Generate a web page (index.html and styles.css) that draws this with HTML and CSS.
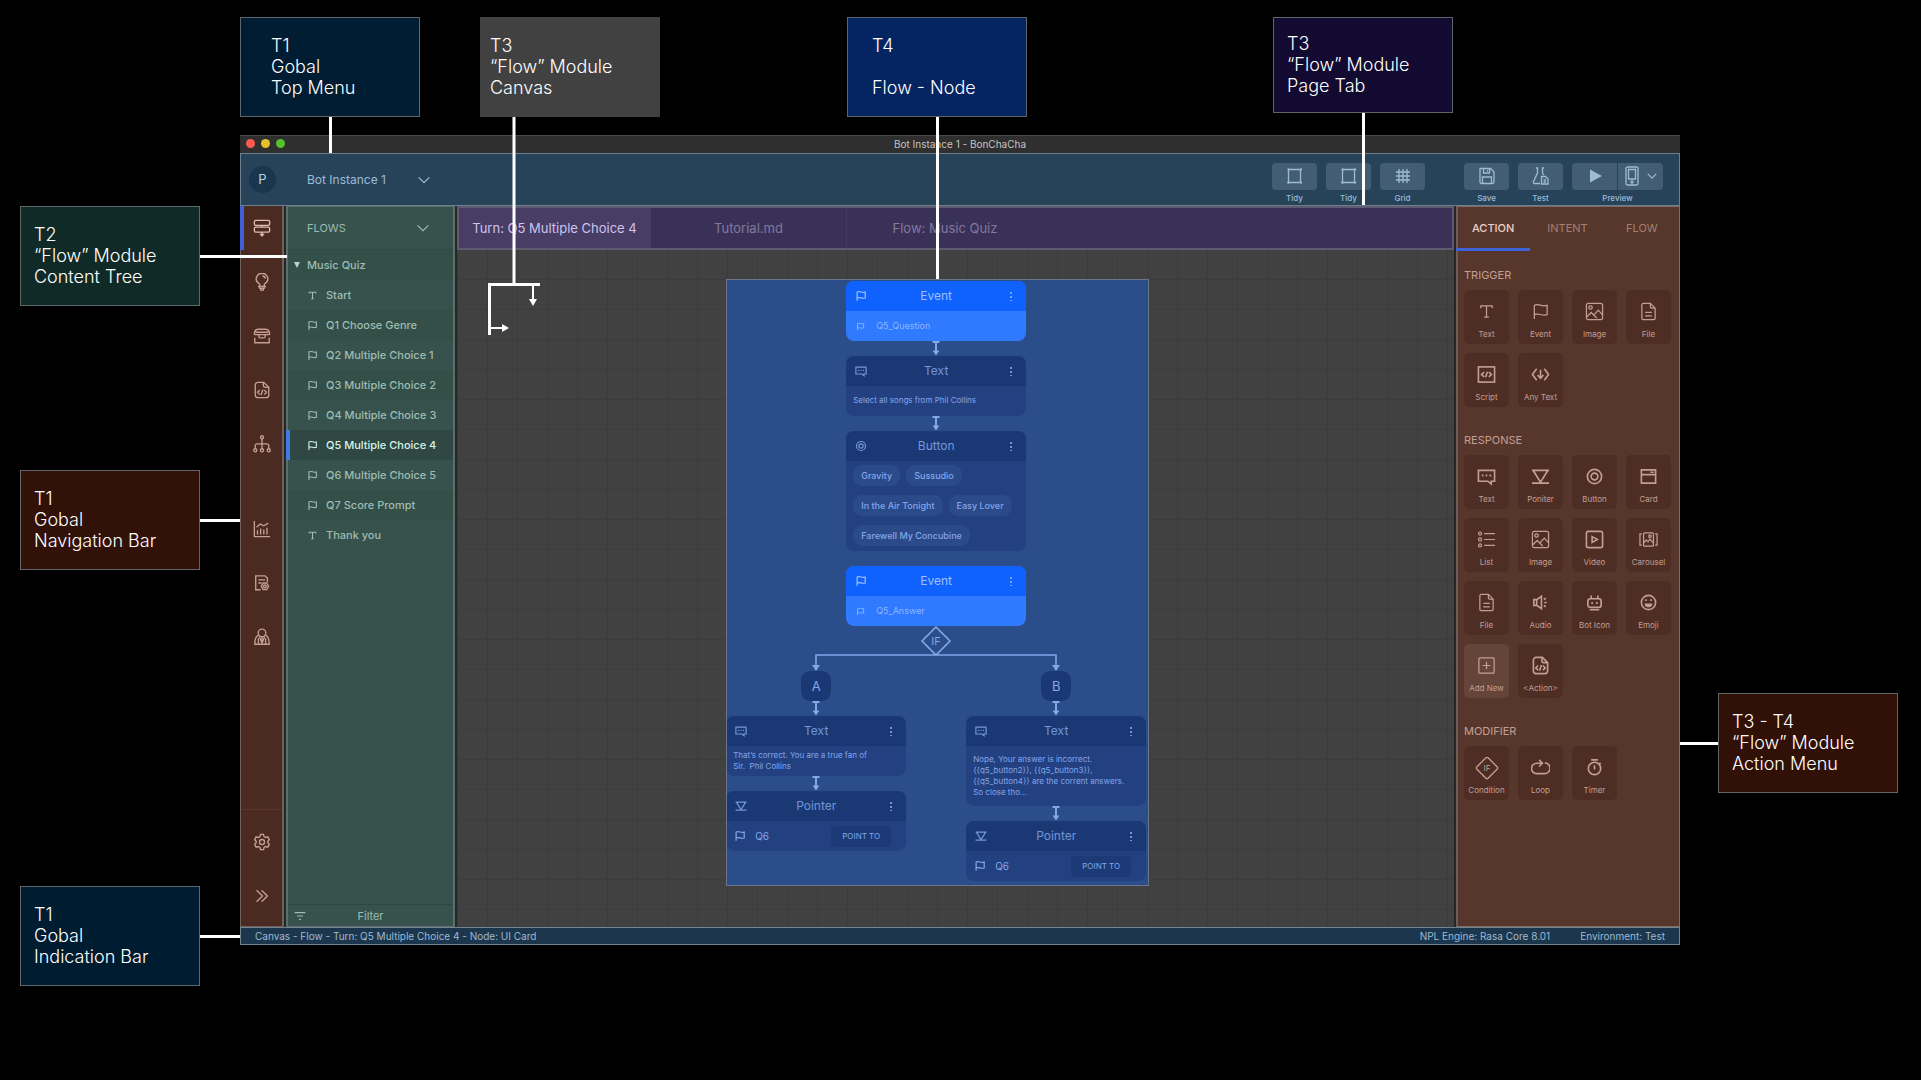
FILE: index.html
```html
<!DOCTYPE html>
<html lang="en">
<head>
<meta charset="utf-8">
<meta name="viewport" content="width=device-width, initial-scale=1">
<title>Bot Instance 1 - BonChaCha</title>
<link rel="stylesheet" href="styles.css">
</head>
<body>
<svg class="sprite" aria-hidden="true">
  <symbol id="i-flow" viewBox="0 0 20 20"><rect x="1.500" y="1.500" width="17" height="5.500" rx="1.500"/><rect x="1.500" y="9" width="17" height="5.500" rx="1.500"/><path d="M10 7v2M10 14.500v3"/><path class="solid" d="M7 16.500h6l-3 3.500z"/></symbol>
  <symbol id="i-bulb" viewBox="0 0 20 20"><path d="M7.500 15v-2.500C5.200 11.200 3.500 9.300 3.500 6.800a6.500 6.500 0 0 1 13 0c0 2.500-1.700 4.400-4 5.700V15M5.500 15h9M7.500 15v2h5v-2M8.500 17v2h3v-2M10.500 3.300c1.700.2 3 1.400 3.200 3"/></symbol>
  <symbol id="i-chest" viewBox="0 0 20 20"><path d="M1.500 8.500c0-4 1.500-6 4.500-6h8c3 0 4.500 2 4.500 6M3 5.800h14M1.500 8.500h17M6.500 8.500v2c0 1 .7 1.500 1.500 1.500h4c.8 0 1.500-.5 1.500-1.500v-2M2 12v5.500h16V12"/></symbol>
  <symbol id="i-code-file" viewBox="0 0 20 20"><path d="M12 1.500H5.500a3 3 0 0 0-3 3v11a3 3 0 0 0 3 3h9a3 3 0 0 0 3-3V7zM11.500 1.500V5c0 1.300.8 2 2 2h4M7.500 10L5 12.500 7.500 15M12.500 10l2.500 2.500-2.500 2.500M11 9.500l-2 6"/></symbol>
  <symbol id="i-tree" viewBox="0 0 20 20"><circle cx="10" cy="2.500" r="1.700"/><circle cx="2.500" cy="17" r="1.700"/><circle cx="10" cy="17" r="1.700"/><circle cx="17.500" cy="17" r="1.700"/><path d="M10 4.200v11.100M2.500 15.300V12c0-1.500.7-2.200 2.200-2.200h10.600c1.500 0 2.200.7 2.200 2.200v3.300"/></symbol>
  <symbol id="i-chart" viewBox="0 0 20 20"><path d="M1.500 1v17.500H19M5 16v-4.500M8.500 16V9.500M12 16v-5.500M15.500 16V8.500M4 8l4-3.500 4 2L17 3.500"/></symbol>
  <symbol id="i-report" viewBox="0 0 20 20"><path d="M8.500 17.500H3V2h10.500l2.500 2.500v4.500M6 6.500h7.500M6 10h3.500M9.300 13.500l2-3.500h4l2 3.500-2 3.700h-4z"/><circle cx="13.300" cy="13.600" r="1.500"/></symbol>
  <symbol id="i-agent" viewBox="0 0 20 20"><circle cx="10" cy="5.500" r="4.200"/><path d="M6.500 8c-3 .8-4.500 3.500-4.500 10h16c0-6.500-1.500-9.200-4.500-10M7 9.500l3 7.500 3-7.500M6 11.500V18M14 11.500V18M10 10v7"/></symbol>
  <symbol id="i-gear" viewBox="0 0 20 20"><path d="M8.300 1.500h3.400l.6 2.500 1.700 1 2.500-.7 1.700 3-1.700 1.800v1.800l1.700 1.800-1.700 3-2.500-.7-1.700 1-.6 2.500H8.300l-.6-2.500-1.700-1-2.500.7-1.700-3 1.700-1.800V9.100L1.800 7.300l1.700-3L6 5l1.700-1z"/><circle cx="10" cy="10" r="2.800"/></symbol>
  <symbol id="i-forward" viewBox="0 0 20 20"><path d="M4 3.500l6.500 6.500L4 16.500M9.500 3.500L16 10l-6.500 6.500"/></symbol>
  <symbol id="i-chevron" viewBox="0 0 20 20"><path d="M4 7l6 6 6-6"/></symbol>
  <symbol id="i-filter" viewBox="0 0 20 20"><path d="M1 4.500h18M5 10h10M8.500 15.500h3"/></symbol>
  <symbol id="i-t" viewBox="0 0 20 20"><path d="M4 6.500V4h12v2.500M10 4v12M7.500 16h5"/></symbol>
  <symbol id="i-flag" viewBox="0 0 20 20"><path d="M3.500 18V3.500c4.500-2.500 7.500 2 13.500 0v9.800c-6 2-9-2.300-13.500 0"/></symbol>
  <symbol id="i-image" viewBox="0 0 20 20"><rect x="1.500" y="1.500" width="17" height="17" rx="2"/><circle cx="5.800" cy="5.800" r="1.800"/><path d="M2 15.500L6.500 11l4.500 4.500L12.500 17M9.500 13.500L14 8.500l4.500 5"/></symbol>
  <symbol id="i-file" viewBox="0 0 20 20"><path d="M12 1.500H4.500a1.500 1.500 0 0 0-1.500 1.500v14a1.500 1.500 0 0 0 1.500 1.500h11A1.500 1.500 0 0 0 17 17V6.500zM12 1.500v3.500a1.500 1.500 0 0 0 1.500 1.500H17M6.500 11h7M6.500 14.500h7"/></symbol>
  <symbol id="i-script" viewBox="0 0 20 20"><rect x="1.500" y="2" width="17" height="16"/><path d="M7.500 7.500L4.800 10l2.700 2.500M12.500 7.500l2.700 2.500-2.700 2.500M11 7l-2 6"/></symbol>
  <symbol id="i-anytext" viewBox="0 0 20 20"><path d="M6 4l-4.500 6L6 16M14 4l4.500 6-4.500 6M10 5v9M7 10.500l3 3.500 3-3.500"/></symbol>
  <symbol id="i-message" viewBox="0 0 20 20"><path d="M1.500 3.500h17v11.500H15v3L11.500 15h-10zM6 8v2M10 8v2M14 8v2"/></symbol>
  <symbol id="i-pointer" viewBox="0 0 20 20"><path d="M1 3.500h18M2.500 4L10 16l7.500-12M1 17h18"/></symbol>
  <symbol id="i-button" viewBox="0 0 20 20"><circle cx="10" cy="10" r="7.500"/><circle cx="10" cy="10" r="3.500"/></symbol>
  <symbol id="i-card" viewBox="0 0 20 20"><path d="M2.500 3h15v14h-15zM2.500 8h15M12 5.500h3.500"/></symbol>
  <symbol id="i-list" viewBox="0 0 20 20"><circle cx="3.200" cy="3.800" r="1.600"/><circle cx="3.200" cy="10" r="1.600"/><circle cx="3.200" cy="16.200" r="1.600"/><path d="M7.500 3.800H19M7.500 10H19M7.500 16.200H19"/></symbol>
  <symbol id="i-video" viewBox="0 0 20 20"><rect x="1.500" y="1.500" width="17" height="17" rx="2"/><path d="M7.500 7l5.500 3-5.500 3z"/></symbol>
  <symbol id="i-carousel" viewBox="0 0 20 20"><rect x="4.800" y="3" width="10.400" height="14" rx="1"/><path d="M3 4H1v12h2M17 4h2v12h-2M5 13.500l2.500-3 2 2 2-3 3.500 4"/><circle cx="11.500" cy="6.500" r="1.300"/></symbol>
  <symbol id="i-audio" viewBox="0 0 20 20"><path d="M3 7h3l5-3.500v13L6 13H3zM6 7v6M14 10h2.500M13.500 6.800l2-1.300M13.500 13.200l2 1.300"/></symbol>
  <symbol id="i-bot" viewBox="0 0 20 20"><rect x="3" y="6" width="14" height="9" rx="2.500"/><path d="M6.500 6V2.500M13.500 6V2.500M7.500 9.500v2M12.500 9.500v2M5 17.500h10"/></symbol>
  <symbol id="i-emoji" viewBox="0 0 20 20"><circle cx="10" cy="10" r="7.500"/><path d="M7.300 6.500v2M12.700 6.500v2"/><path class="solid" d="M6 11h8a4 4 0 0 1-8 0z"/></symbol>
  <symbol id="i-add" viewBox="0 0 20 20"><rect x="2" y="2" width="16" height="16" rx="1"/><path d="M10 6v8M6 10h8"/></symbol>
  <symbol id="i-if" viewBox="0 0 30 30"><rect x="7" y="7" width="16" height="16" rx="1.500" transform="rotate(45 15 15)"/></symbol>
  <symbol id="i-loop" viewBox="0 0 20 20"><path d="M14.500 5a5.500 5.500 0 0 1-.5 11.500H6A5.500 5.500 0 0 1 6 5.500h5M8.500 2l3.500 3.500L8.500 9"/></symbol>
  <symbol id="i-timer" viewBox="0 0 20 20"><circle cx="10" cy="11" r="6.500"/><path d="M6.500 2h7M10 7.500V12M15 5l1.500 1.500"/></symbol>
  <symbol id="i-tidy" viewBox="0 0 20 20"><path d="M3.500 3.500h13M15.500 3v13.500M16.500 16.500h-14M3.500 17.500V4"/><path class="solid" d="M2.500 2.500h2v2h-2zM15 2.500h2v2h-2zM15 15.500h2v2h-2zM2.500 15.500h2v2h-2z"/></symbol>
  <symbol id="i-grid" viewBox="0 0 20 20"><path d="M6 3v14M10 3v14M14 3v14M3 6h14M3 10h14M3 14h14"/></symbol>
  <symbol id="i-save" viewBox="0 0 20 20"><path d="M3 2.500h10.500L17 6v10a1.500 1.500 0 0 1-1.500 1.500h-11A1.500 1.500 0 0 1 3 16zM6.500 2.500V7h6V2.500M5.500 17.500V11h9v6.500M10.500 4v1.500"/></symbol>
  <symbol id="i-test" viewBox="0 0 20 20"><path d="M5 2h1.500v5L2.500 15.500c-.5 1.200 0 2 1.200 2H9M13 2h-1.500v5l1.300 2M10.500 10.500h4l2.500 2.500v5h-6.500zM12.500 14h2.500M12.500 16h2.500"/></symbol>
  <symbol id="i-phone" viewBox="0 0 20 20"><rect x="4" y="1" width="12" height="18" rx="1.500"/><path d="M6.500 3.500h7v9.500h-7z"/><circle cx="10" cy="16" r="1"/></symbol>
  <symbol id="i-arrow" viewBox="0 0 10 15"><path d="M1.500 1h7M5 1v10"/><path class="solid" d="M1.500 9.500h7L5 14.500z"/></symbol>
</svg>

<main class="board">
  <div class="notes-top">
    <aside class="note note-menu note-inset">T1<br>Gobal<br>Top Menu</aside>
    <aside class="note note-canvas">T3<br>“Flow” Module<br>Canvas
      <svg class="bracket" viewBox="0 0 52 218" aria-hidden="true"><path d="M26 0v168M0 167.500h52M1.500 166v52"/><path class="thin" d="M45 168v15M3 211h12"/><path class="solid" d="M41 182h8l-4 7zM14 207l7 4-7 4z"/></svg>
    </aside>
    <aside class="note note-node note-inset">T4<br><br>Flow - Node</aside>
    <aside class="note note-tab">T3<br>“Flow” Module<br>Page Tab</aside>
  </div>

  <div class="notes-left">
    <aside class="note note-tree">T2<br>“Flow” Module<br>Content Tree</aside>
    <aside class="note note-nav">T1<br>Gobal<br>Navigation Bar</aside>
    <aside class="note note-status">T1<br>Gobal<br>Indication Bar</aside>
  </div>

  <section class="window">
    <header class="titlebar">
      <span class="lights"><i class="red"></i><i class="yellow"></i><i class="green"></i></span>
      <h1>Bot Instance 1 - BonChaCha</h1>
    </header>

    <div class="topmenu">
      <span class="avatar">P</span>
      <label class="picker picker-bot"><select aria-label="Bot instance"><option>Bot Instance 1</option></select><svg class="chev"><use href="#i-chevron"/></svg></label>
      <div class="tools">
        <div class="tool"><button id="b1" type="button"><svg><use href="#i-tidy"/></svg></button><label for="b1">Tidy</label></div>
        <div class="tool"><button id="b2" type="button"><svg><use href="#i-tidy"/></svg></button><label for="b2">Tidy</label></div>
        <div class="tool"><button id="b3" type="button"><svg><use href="#i-grid"/></svg></button><label for="b3">Grid</label></div>
      </div>
      <div class="tools">
        <div class="tool"><button id="b4" type="button"><svg><use href="#i-save"/></svg></button><label for="b4">Save</label></div>
        <div class="tool"><button id="b5" type="button"><svg><use href="#i-test"/></svg></button><label for="b5">Test</label></div>
        <div class="tool"><span class="split"><button id="b6" type="button"><svg viewBox="0 0 20 20"><path class="solid" d="M5 3.500v13l12-6.500z"/></svg></button><button type="button" aria-label="Preview device"><svg><use href="#i-phone"/></svg><svg class="small"><use href="#i-chevron"/></svg></button></span><label for="b6">Preview</label></div>
      </div>
    </div>

    <div class="workspace">
      <nav class="rail" aria-label="Modules">
        <button class="on" type="button" aria-label="Flow"><svg><use href="#i-flow"/></svg></button>
        <button type="button" aria-label="Intents"><svg><use href="#i-bulb"/></svg></button>
        <button type="button" aria-label="Storage"><svg><use href="#i-chest"/></svg></button>
        <button type="button" aria-label="Scripts"><svg><use href="#i-code-file"/></svg></button>
        <button type="button" aria-label="Structure"><svg><use href="#i-tree"/></svg></button>
        <button class="group" type="button" aria-label="Analytics"><svg><use href="#i-chart"/></svg></button>
        <button type="button" aria-label="Reports"><svg><use href="#i-report"/></svg></button>
        <button type="button" aria-label="Agents"><svg><use href="#i-agent"/></svg></button>
        <div class="rail-end">
          <button type="button" aria-label="Settings"><svg><use href="#i-gear"/></svg></button>
          <button type="button" aria-label="Expand"><svg><use href="#i-forward"/></svg></button>
        </div>
      </nav>

      <section class="tree">
        <label class="picker picker-flow"><select aria-label="Tree"><option>FLOWS</option></select><svg class="chev"><use href="#i-chevron"/></svg></label>
        <ul>
          <li class="root alt"><a href="#"><span class="caret"></span>Music Quiz</a></li>
          <li><a href="#"><svg><use href="#i-t"/></svg>Start</a></li>
          <li class="alt"><a href="#"><svg><use href="#i-flag"/></svg>Q1 Choose Genre</a></li>
          <li><a href="#"><svg><use href="#i-flag"/></svg>Q2 Multiple Choice 1</a></li>
          <li class="alt"><a href="#"><svg><use href="#i-flag"/></svg>Q3 Multiple Choice 2</a></li>
          <li><a href="#"><svg><use href="#i-flag"/></svg>Q4 Multiple Choice 3</a></li>
          <li class="current"><a href="#"><svg><use href="#i-flag"/></svg>Q5 Multiple Choice 4</a></li>
          <li><a href="#"><svg><use href="#i-flag"/></svg>Q6 Multiple Choice 5</a></li>
          <li class="alt"><a href="#"><svg><use href="#i-flag"/></svg>Q7 Score Prompt</a></li>
          <li><a href="#"><svg><use href="#i-t"/></svg>Thank you</a></li>
        </ul>
        <label class="filter"><svg><use href="#i-filter"/></svg><input type="text" placeholder="Filter" aria-label="Filter"></label>
      </section>

      <section class="editor">
        <div class="tabs">
          <button class="on" type="button">Turn: Q5 Multiple Choice 4</button>
          <button type="button">Tutorial.md</button>
          <button type="button">Flow: Music Quiz</button>
        </div>
        <div class="canvas">
          <div class="diagram">
            <article class="node event">
              <h2><svg><use href="#i-flag"/></svg>Event<span class="dots"></span></h2>
              <div class="ref"><svg><use href="#i-flag"/></svg>Q5_Question</div>
            </article>
            <svg class="arrow"><use href="#i-arrow"/></svg>
            <article class="node">
              <h2><svg><use href="#i-message"/></svg>Text<span class="dots"></span></h2>
              <p class="single">Select all songs from Phil Collins</p>
            </article>
            <svg class="arrow"><use href="#i-arrow"/></svg>
            <article class="node">
              <h2><svg><use href="#i-button"/></svg>Button<span class="dots"></span></h2>
              <div class="chips"><button type="button">Gravity</button><button type="button">Sussudio</button><button type="button">In the Air Tonight</button><button type="button">Easy Lover</button><button type="button">Farewell My Concubine</button></div>
            </article>
            <article class="node event spaced">
              <h2><svg><use href="#i-flag"/></svg>Event<span class="dots"></span></h2>
              <div class="ref"><svg><use href="#i-flag"/></svg>Q5_Answer</div>
            </article>
            <svg class="fork" viewBox="0 0 420 45" role="img" aria-label="If"><path d="M210 1l14 14-14 14-14-14zM90 40V29h240v11"/><path class="solid" d="M86 39h8l-4 6zM326 39h8l-4 6z"/><text x="210" y="19">IF</text></svg>
            <div class="branches">
              <div class="branch">
                <span class="letter">A</span>
                <svg class="arrow"><use href="#i-arrow"/></svg>
                <article class="node">
                  <h2><svg><use href="#i-message"/></svg>Text<span class="dots"></span></h2>
                  <p>That’s correct. You are a true fan of<br>Sir.&nbsp; Phil Collins</p>
                </article>
                <svg class="arrow"><use href="#i-arrow"/></svg>
                <article class="node">
                  <h2><svg><use href="#i-pointer"/></svg>Pointer<span class="dots"></span></h2>
                  <div class="target"><svg><use href="#i-flag"/></svg>Q6<button type="button">POINT TO</button></div>
                </article>
              </div>
              <div class="branch">
                <span class="letter">B</span>
                <svg class="arrow"><use href="#i-arrow"/></svg>
                <article class="node">
                  <h2><svg><use href="#i-message"/></svg>Text<span class="dots"></span></h2>
                  <p class="long">Nope, Your answer is incorrect.<br>{{q5_button2}}, {{q5_button3}},<br>{{q5_button4}} are the corrent answers.<br>So close tho...</p>
                </article>
                <svg class="arrow"><use href="#i-arrow"/></svg>
                <article class="node">
                  <h2><svg><use href="#i-pointer"/></svg>Pointer<span class="dots"></span></h2>
                  <div class="target"><svg><use href="#i-flag"/></svg>Q6<button type="button">POINT TO</button></div>
                </article>
              </div>
            </div>
          </div>
        </div>
      </section>

      <aside class="actions">
        <div class="actions-tabs"><button class="on" type="button">ACTION</button><button type="button">INTENT</button><button type="button">FLOW</button></div>
        <h2>TRIGGER</h2>
        <div class="tiles">
          <button type="button"><svg><use href="#i-t"/></svg>Text</button>
          <button type="button"><svg><use href="#i-flag"/></svg>Event</button>
          <button type="button"><svg><use href="#i-image"/></svg>Image</button>
          <button type="button"><svg><use href="#i-file"/></svg>File</button>
          <button type="button"><svg class="bold"><use href="#i-script"/></svg>Script</button>
          <button type="button"><svg class="bold"><use href="#i-anytext"/></svg>Any Text</button>
        </div>
        <h2>RESPONSE</h2>
        <div class="tiles">
          <button type="button"><svg class="bold"><use href="#i-message"/></svg>Text</button>
          <button type="button"><svg class="bold"><use href="#i-pointer"/></svg>Poniter</button>
          <button type="button"><svg class="bold"><use href="#i-button"/></svg>Button</button>
          <button type="button"><svg class="bold"><use href="#i-card"/></svg>Card</button>
          <button type="button"><svg><use href="#i-list"/></svg>List</button>
          <button type="button"><svg><use href="#i-image"/></svg>Image</button>
          <button type="button"><svg class="bold"><use href="#i-video"/></svg>Video</button>
          <button type="button"><svg><use href="#i-carousel"/></svg>Carousel</button>
          <button type="button"><svg><use href="#i-file"/></svg>File</button>
          <button type="button"><svg class="bold"><use href="#i-audio"/></svg>Audio</button>
          <button type="button"><svg class="bold"><use href="#i-bot"/></svg>Bot Icon</button>
          <button type="button"><svg class="bold"><use href="#i-emoji"/></svg>Emoji</button>
          <button class="add" type="button"><svg><use href="#i-add"/></svg>Add New</button>
          <button type="button"><svg class="bold"><use href="#i-code-file"/></svg>&lt;Action&gt;</button>
        </div>
        <h2>MODIFIER</h2>
        <div class="tiles">
          <button type="button"><svg class="wide" viewBox="0 0 30 30"><use href="#i-if"/><text x="15" y="18">IF</text></svg>Condition</button>
          <button type="button"><svg class="bold"><use href="#i-loop"/></svg>Loop</button>
          <button type="button"><svg class="bold"><use href="#i-timer"/></svg>Timer</button>
        </div>
      </aside>
    </div>

    <footer class="statusbar">
      <span>Canvas - Flow - Turn: Q5 Multiple Choice 4 - Node: UI Card</span>
      <span class="engine">NPL Engine: Rasa Core 8.01</span>
      <span>Environment: Test</span>
    </footer>
  </section>

  <div class="notes-right">
    <aside class="note note-action">T3 - T4<br>“Flow” Module<br>Action Menu</aside>
  </div>
</main>
</body>
</html>
```
FILE: styles.css
```css
* { box-sizing: border-box; }

body {
  margin: 0;
  background: #000;
  color: #fff;
  font: 11px/14px Inter, "Liberation Sans", sans-serif;
}

h1, h2, p, ul { margin: 0; padding: 0; font-weight: 400; }
ul { list-style: none; }
a { color: inherit; text-decoration: none; }

button, select, input {
  margin: 0;
  padding: 0;
  border: 0;
  background: none;
  color: inherit;
  font: inherit;
}

svg {
  display: block;
  flex: none;
  width: 20px;
  height: 20px;
  fill: none;
  stroke: currentColor;
  stroke-width: 1.300;
}
svg.bold { stroke-width: 1.700; }
svg .solid { fill: currentColor; stroke: none; }
svg text { fill: currentColor; stroke: none; text-anchor: middle; }
.sprite { position: absolute; width: 0; height: 0; }

/* Board: annotations around the application window */
.board {
  display: grid;
  grid-template-columns: 240px minmax(0, 1fr) 241px;
  grid-template-rows: 135px auto;
  align-items: start;
}

.notes-top {
  grid-column: 2;
  display: grid;
  grid-template-columns: 180px 60px 180px 187fr 180px 246fr 181px 226fr;
  align-items: start;
  padding-top: 17px;
}
.note-menu { grid-column: 1; }
.note-canvas { grid-column: 3; }
.note-node { grid-column: 5; }
.note-tab { grid-column: 7; }

.notes-left { grid-column: 1; padding: 71px 0 0 20px; }
.notes-right { grid-column: 3; padding: 558px 0 0 38px; }

.note {
  position: relative;
  display: flow-root;
  width: 180px;
  height: 100px;
  padding: 17px 0 0 13px;
  border: 1px solid #5f666b;
  font-size: 18px;
  font-weight: 300;
  line-height: 21px;
}
.note::after {
  content: "";
  position: absolute;
  z-index: 2;
  background: #fff;
}
.note-menu { background: #001d33; }
.note-menu::after { top: 99px; left: 88px; width: 3px; height: 36px; }
.note-inset { padding-left: 30px; }
.note-canvas {
  padding: 18px 0 0 10px;
  border: 0;
  background: #414141;
}
.note-canvas::after { content: none; }
.note-node { padding-left: 24px; background: #052562; }
.note-node::after { top: 99px; left: 88px; width: 3px; height: 162px; }
.note-tab { height: 96px; padding-top: 15px; background: #120a30; }
.note-tab::after { top: 95px; left: 88px; width: 3px; height: 92px; }
.note-tree { background: #102b27; }
.note-tree::after { top: 48px; left: 179px; width: 87px; height: 3px; }
.note-nav { margin-top: 164px; background: #311108; }
.note-nav::after, .note-status::after { top: 48px; left: 179px; width: 40px; height: 3px; }
.note-status { margin-top: 316px; background: #001c31; }
.note-action { background: #301007; }
.note-action::after { top: 48px; right: 179px; width: 38px; height: 3px; }

.bracket {
  position: absolute;
  z-index: 2;
  top: 100px;
  left: 8px;
  width: 52px;
  height: 218px;
  stroke-width: 3;
}
.bracket .thin { stroke-width: 2; }

/* Application window */
.window {
  grid-column: 2;
  display: flex;
  flex-direction: column;
  min-height: 75vh;
  background: #262626;
}

.titlebar {
  display: grid;
  grid-template-columns: 1fr auto 1fr;
  align-items: center;
  height: 18px;
  padding-bottom: 2px;
  border-top: 1px solid #4a4a4a;
  background: #2f2f2f;
  color: #c4c4c4;
}
.titlebar h1 { font-size: 10px; line-height: 14px; }
.lights { display: flex; gap: 6px; padding-left: 6px; }
.lights i { width: 9px; height: 9px; border-radius: 50%; }
.red { background: #ff5a52; }
.yellow { background: #e6c029; }
.green { background: #53c22b; }

.topmenu {
  display: flex;
  align-items: center;
  height: 53px;
  padding: 0 16px 0 8px;
  border: 1px solid #6d7f8c;
  background: #27435a;
  color: #9dbbd6;
}
.avatar {
  width: 27px;
  height: 27px;
  border-radius: 50%;
  background: #19364e;
  color: #b8d2ea;
  font-size: 13px;
  line-height: 27px;
  text-align: center;
}
.picker { display: flex; align-items: center; }
.picker select { flex: 1; appearance: none; }
.chev { width: 18px; height: 18px; }
.picker-bot { width: 126px; margin: 0 auto 0 31px; font-size: 12px; }

.tools { display: flex; gap: 9px; margin-left: 39px; padding-top: 6px; }
.tool {
  display: flex;
  flex-direction: column;
  align-items: center;
  font-size: 8px;
  font-weight: 500;
  line-height: 10px;
}
.tool button {
  display: flex;
  align-items: center;
  justify-content: center;
  width: 45px;
  height: 27px;
  margin-bottom: 3px;
  border-radius: 4px;
  background: #435e74;
}
.split { display: flex; gap: 1px; }
.split button:first-child { border-radius: 4px 0 0 4px; }
.split button:last-child { border-radius: 0 4px 4px 0; }
.tool .small { width: 14px; height: 14px; margin-left: 3px; stroke-width: 1.700; }

.workspace {
  display: grid;
  grid-template-columns: 44px 169px minmax(0, 1fr) 224px;
  column-gap: 2px;
  flex: 1;
}

.rail {
  display: flex;
  flex-direction: column;
  gap: 10px;
  border: 1px solid #6f625e;
  border-width: 0 2px 1px 1px;
  background: #4a2a21;
  color: #c69e92;
}
.rail button {
  display: flex;
  align-items: center;
  justify-content: center;
  height: 44px;
}
.rail svg { width: 18px; height: 18px; stroke-width: 1.500; }
.rail .on { margin-left: -1px; border-left: 4px solid #3f62d6; padding-right: 3px; color: #e0bcb0; }
.rail .group { margin-top: 31px; }
.rail-end {
  display: grid;
  gap: 10px;
  margin-top: auto;
  padding: 10px 0 8px;
  border-top: 1px solid #5a352b;
}

.tree {
  display: flex;
  flex-direction: column;
  border: 2px solid #5d6f6b;
  border-width: 1px 2px;
  background: #37514c;
  color: #9dbdb2;
}
.picker-flow { height: 43px; padding: 0 21px 0 19px; border-bottom: 1px solid #304943; }
.tree a {
  display: flex;
  align-items: center;
  gap: 8px;
  height: 30px;
  padding-left: 19px;
  font-weight: 500;
}
.tree a svg { width: 11px; height: 11px; stroke-width: 2; }
.tree .alt { background: #344e48; }
.tree .root a { gap: 7px; padding-left: 6px; }
.caret {
  border: solid transparent;
  border-width: 6px 3px 0;
  border-top-color: #b7d6cb;
}
.tree .current {
  margin-left: -2px;
  border-left: 4px solid #3f7be0;
  background: #2f4843;
  color: #d6f2e7;
}
.tree .current a { padding-left: 17px; }
.filter {
  display: flex;
  align-items: center;
  height: 22px;
  margin-top: auto;
  padding: 0 18px 0 6px;
  border-top: 1px solid #2e4741;
}
.filter svg { width: 12px; height: 12px; stroke-width: 2; }
.filter input { flex: 1; min-width: 0; text-align: center; outline: 0; }
.filter input::placeholder { color: inherit; opacity: 1; }

.editor { display: flex; flex-direction: column; }
.tabs {
  display: flex;
  height: 44px;
  border: 2px solid #5f5a70;
  background: #3a3158;
  color: #83789f;
  font-size: 13px;
}
.tabs button { width: 196px; border-right: 1px solid #453c63; }
.tabs button:last-child { border: 0; }
.tabs .on { width: 192px; background: #473d65; color: #d0c3ee; }

.canvas {
  flex: 1;
  padding: 29px 0 40px 27%;
  background-color: #414141;
  background-image:
    linear-gradient(#3c3c3c 1px, transparent 1px),
    linear-gradient(90deg, #3c3c3c 1px, transparent 1px);
  background-size: 30px 30px;
  background-position: 0 29px;
}

/* Flow diagram */
.diagram {
  display: flex;
  flex-direction: column;
  align-items: center;
  width: 423px;
  padding: 2px 3px 5px 0;
  outline: 1px solid #6b7688;
  outline-offset: -1px;
  background-color: rgba(38, 80, 155, .8);
  color: #84a6ea;
}
.node {
  width: 180px;
  border-radius: 8px;
  background: #234180;
  overflow: hidden;
}
.node h2 {
  display: grid;
  grid-template-columns: 20px 1fr 20px;
  align-items: center;
  height: 30px;
  padding: 0 5px;
  background: #1a3974;
  color: #7595d8;
  font-size: 12px;
  text-align: center;
}
.node h2 svg { width: 12px; height: 12px; margin-left: 4px; stroke-width: 2; }
.dots {
  justify-self: center;
  width: 2px;
  height: 9px;
  background: repeating-linear-gradient(currentColor 0 2px, transparent 2px 4px);
}
.event .dots { opacity: .7; }
.node p {
  height: 30px;
  padding: 4px 7px 0;
  font-size: 8px;
  line-height: 11px;
}
.node .single { padding-top: 9px; }
.node .long { height: 60px; padding-top: 8px; }
.event { background: #2f7aff; color: #8db5ff; }
.event h2 { background: #0f62fe; color: #9fc0ff; }
.ref {
  display: flex;
  align-items: center;
  gap: 11px;
  height: 30px;
  padding: 0 10px;
  font-size: 9px;
}
.ref svg { width: 9px; height: 9px; stroke-width: 2; }
.spaced { margin-top: 15px; }

.arrow { width: 10px; height: 15px; stroke-width: 2; color: #84a6ea; }
.fork { width: 420px; height: 45px; stroke-width: 1.600; }
.fork text { font-size: 11px; }

.chips {
  display: flex;
  flex-wrap: wrap;
  gap: 9px 6px;
  padding: 4px 7px 5px;
}
.chips button {
  height: 21px;
  padding: 0 8px;
  border-radius: 9px;
  background: #2b4a89;
  font-size: 9px;
  font-weight: 500;
}

.branches { display: flex; align-items: flex-start; gap: 60px; }
.branch { display: flex; flex-direction: column; align-items: center; }
.letter {
  width: 30px;
  height: 30px;
  border-radius: 9px;
  background: #1a3974;
  font-size: 13px;
  line-height: 30px;
  text-align: center;
}
.target {
  display: flex;
  align-items: center;
  gap: 9px;
  height: 30px;
  padding: 0 15px 0 8px;
  font-size: 10px;
}
.target svg { width: 12px; height: 12px; stroke-width: 2; }
.target button {
  width: 60px;
  height: 21px;
  margin-left: auto;
  border-radius: 4px;
  background: #1c3a75;
  font-size: 8px;
}

/* Action menu */
.actions {
  border: 1px solid #7d6c67;
  border-left: 2px solid #6a5d5a;
  background: #57372c;
  color: #c39f93;
}
.actions-tabs {
  display: grid;
  grid-template-columns: 1fr 1fr 1fr;
  height: 44px;
  margin-left: -2px;
  color: #a08075;
}
.actions-tabs .on { border-bottom: 3px solid #3f62d6; color: #efcfc4; font-weight: 500; }
.actions-tabs button { padding-bottom: 3px; }
.actions-tabs .on { padding-bottom: 0; }
.actions h2 {
  padding: 17px 0 8px 6px;
  font-size: 11px;
}
.tiles {
  display: grid;
  grid-template-columns: repeat(4, 45px);
  gap: 9px;
  padding: 0 6px;
  margin-bottom: 9px;
}
.tiles button {
  display: flex;
  flex-direction: column;
  align-items: center;
  height: 54px;
  padding-top: 12px;
  border-radius: 5px;
  background: #4e2d24;
  font-size: 8px;
  line-height: 10px;
  white-space: nowrap;
}
.tiles svg { width: 19px; height: 19px; margin-bottom: 8px; }
.tiles .wide { width: 30px; height: 30px; margin: -5px 0 2px; }
.tiles text { font-size: 8px; }
.tiles .add { background: #65443a; }

.statusbar {
  display: flex;
  align-items: center;
  gap: 30px;
  height: 18px;
  padding: 0 14px;
  border: 1px solid #75838f;
  background: #1b364d;
  color: #9fbad2;
  font-size: 10px;
}
.engine { margin-left: auto; }
```
